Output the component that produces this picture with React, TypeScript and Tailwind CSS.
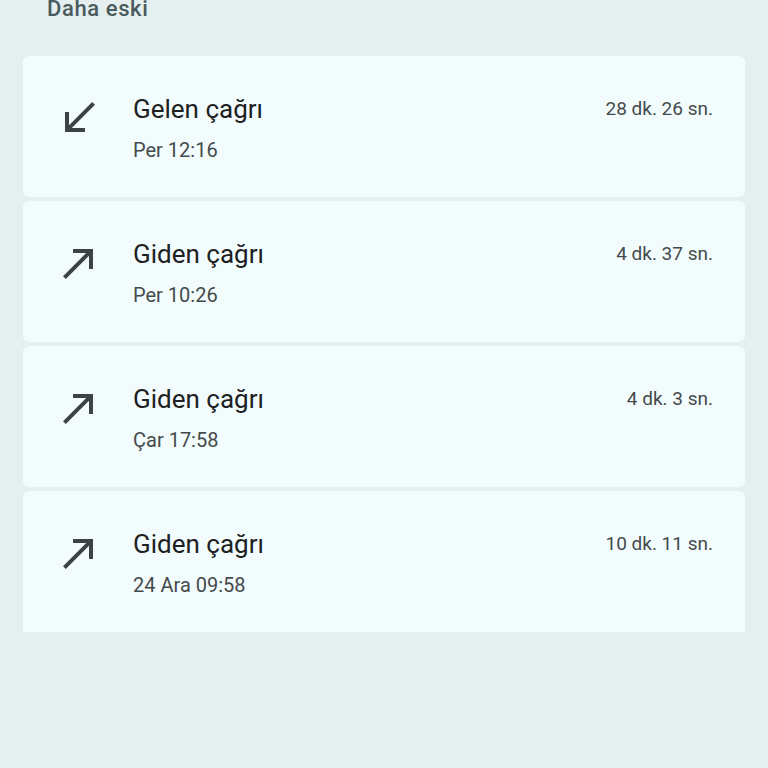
import React from 'react';

type Call = {
  id: number;
  kind: 'in' | 'out';
  label: string;
  time: string;
  duration: string;
};

const calls: Call[] = [
  { id: 1, kind: 'in', label: 'Gelen çağrı', time: 'Per 12:16', duration: '28 dk. 26 sn.' },
  { id: 2, kind: 'out', label: 'Giden çağrı', time: 'Per 10:26', duration: '4 dk. 37 sn.' },
  { id: 3, kind: 'out', label: 'Giden çağrı', time: 'Çar 17:58', duration: '4 dk. 3 sn.' },
  { id: 4, kind: 'out', label: 'Giden çağrı', time: '24 Ara 09:58', duration: '10 dk. 11 sn.' },
];

function CallIcon({ kind }: { kind: Call['kind'] }) {
  return (
    <svg viewBox="0 0 24 24" className="h-12 w-12 shrink-0 fill-[#3c4344]">
      {kind === 'in' ? (
        <path d="M20 5.41L18.59 4 7 15.59V9H5v10h10v-2H8.41z" />
      ) : (
        <path d="M9 5v2h6.59L4 18.59 5.41 20 17 8.41V15h2V5z" />
      )}
    </svg>
  );
}

export default function App() {
  return (
    <div
      className="min-h-[768px] w-full bg-[#e5eff0] px-[23px]"
      style={{ fontFamily: 'Roboto, "Noto Sans", sans-serif' }}
    >
      {/* Section header */}
      <div className="flex h-[56px] items-start pl-[24px]">
        <p className="-mt-[2px] text-[22px] font-medium leading-[22px] tracking-[0.6px] text-[#4a5b5d]">
          Daha eski
        </p>
      </div>

      {/* Call list */}
      <div className="flex flex-col gap-[4px]">
        {calls.map((c, i) => (
          <div
            key={c.id}
            className={
              'flex h-[141px] items-start bg-[#f2fcfd] pl-[32px] pr-[32px] pt-[38px] ' +
              (i === calls.length - 1 ? 'rounded-t-[6px]' : 'rounded-[6px]')
            }
          >
            <CallIcon kind={c.kind} />
            <div className="ml-[30px] -mt-[1px] flex flex-1 flex-col">
              <div className="flex items-center justify-between">
                <span className="text-[26px] leading-[32px] text-[#1d2122]">{c.label}</span>
                <span className="text-[19px] leading-[32px] text-[#454b4c]">{c.duration}</span>
              </div>
              <span className="mt-[11px] text-[20px] leading-[28px] text-[#454b4c]">{c.time}</span>
            </div>
          </div>
        ))}
      </div>
    </div>
  );
}
